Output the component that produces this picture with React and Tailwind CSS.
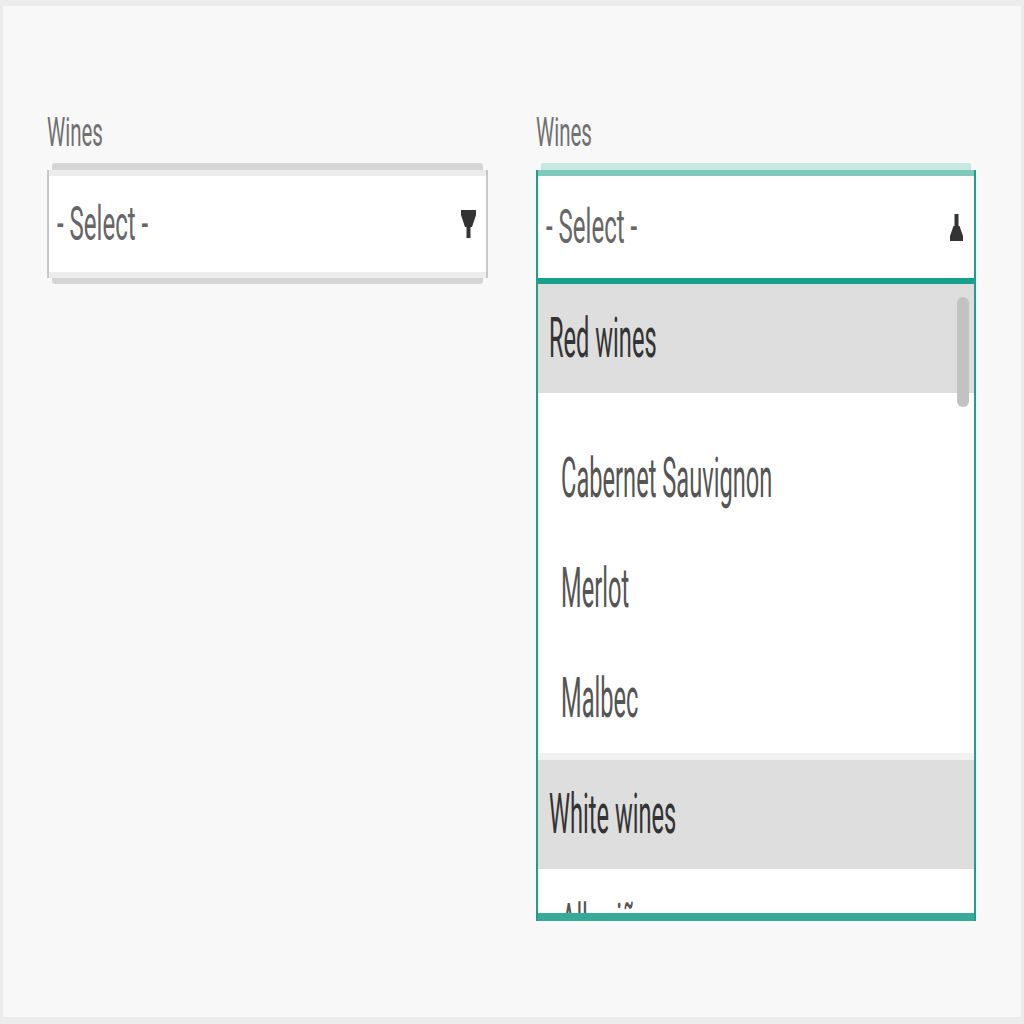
const font = { fontFamily: 'Roboto, "Noto Sans", sans-serif' };

const Text = ({ children, className }) => (
  <span className={`inline-block origin-left whitespace-nowrap leading-none ${className}`}>
    {children}
  </span>
);

const ArrowDown = () => (
  <svg width="15" height="28" viewBox="0 0 15 28" className="fill-[#333]">
    <path d="M0 0H15V5L11 17H9.5V28H5.5V17H4L0 5Z" />
  </svg>
);

const ArrowUp = () => (
  <svg width="13" height="27" viewBox="0 0 13 27" className="fill-[#333]">
    <path d="M4.5 0H8.5V12H9.5L13 22V27H0V22L3.5 12H4.5Z" />
  </svg>
);

const Label = () => (
  <div className="h-[51px]">
    <Text className="text-[41px] text-[#707070] scale-x-[0.5]">Wines</Text>
  </div>
);

const ClosedSelect = () => (
  <div className="w-[441px]">
    <Label />
    <div className="mx-[5px] h-[7px] rounded-t-[3px] bg-[#d6d6d6]" />
    <div className="border-x-2 border-[#c6c6c6] bg-white">
      <div className="h-[6px] bg-[#ececec]" />
      <div className="flex h-[96px] items-center justify-between pl-[8px] pr-[10px]">
        <Text className="text-[48px] text-[#666] scale-x-[0.5]">- Select -</Text>
        <ArrowDown />
      </div>
      <div className="h-[6px] bg-[#ececec]" />
    </div>
    <div className="mx-[5px] h-[6px] rounded-b-[3px] bg-[#d4d4d4]" />
  </div>
);

// la liste est coupée en bas, comme dans la capture
const groups = [
  { label: 'Red wines', gap: true, options: ['Cabernet Sauvignon', 'Merlot', 'Malbec'] },
  { label: 'White wines', gap: false, options: ['Albariño'] },
];

const OpenSelect = () => (
  <div className="w-[440px]">
    <Label />
    <div className="mx-[5px] h-[7px] bg-[#c5e8e1]" />
    <div className="border-x-2 border-[#1f9e8b]">
      <div className="h-[6px] bg-[#80c8ba]" />
      <div className="flex h-[102px] items-center justify-between bg-white pl-[8px] pr-[11px]">
        <Text className="text-[48px] text-[#666] scale-x-[0.5]">- Select -</Text>
        <ArrowUp />
      </div>
      <div className="h-[6px] bg-[#17a08c]" />
      <div className="relative h-[629px] overflow-hidden bg-white">
        {groups.map((group, gi) => (
          <div key={group.label}>
            <div className="flex h-[109px] items-center bg-[#dedede] pl-[11px]">
              <Text className="text-[55px] text-[#333] scale-x-[0.43]">{group.label}</Text>
            </div>
            {group.gap && <div className="h-[30px]" />}
            {group.options.map((opt) => (
              <div key={opt} className="flex h-[110px] items-center pl-[23px]">
                <Text className="text-[55px] text-[#555] scale-x-[0.43]">{opt}</Text>
              </div>
            ))}
            {gi === 0 && <div className="h-[7px] bg-[#f2f2f2]" />}
          </div>
        ))}
        <div className="absolute right-[5px] top-[13px] h-[110px] w-[12px] rounded-full bg-[#c2c2c2]" />
      </div>
      <div className="h-[8px] bg-[#36aa97]" />
    </div>
  </div>
);

export default function App() {
  return (
    <div className="h-[1024px] overflow-hidden bg-[#ececec] pt-[6px]" style={font}>
      <div className="mx-[3px] h-[1011px] bg-[#f8f8f8] pl-[44px] pt-[106px]">
        <div className="flex gap-[48px]">
          <ClosedSelect />
          <OpenSelect />
        </div>
      </div>
    </div>
  );
}
